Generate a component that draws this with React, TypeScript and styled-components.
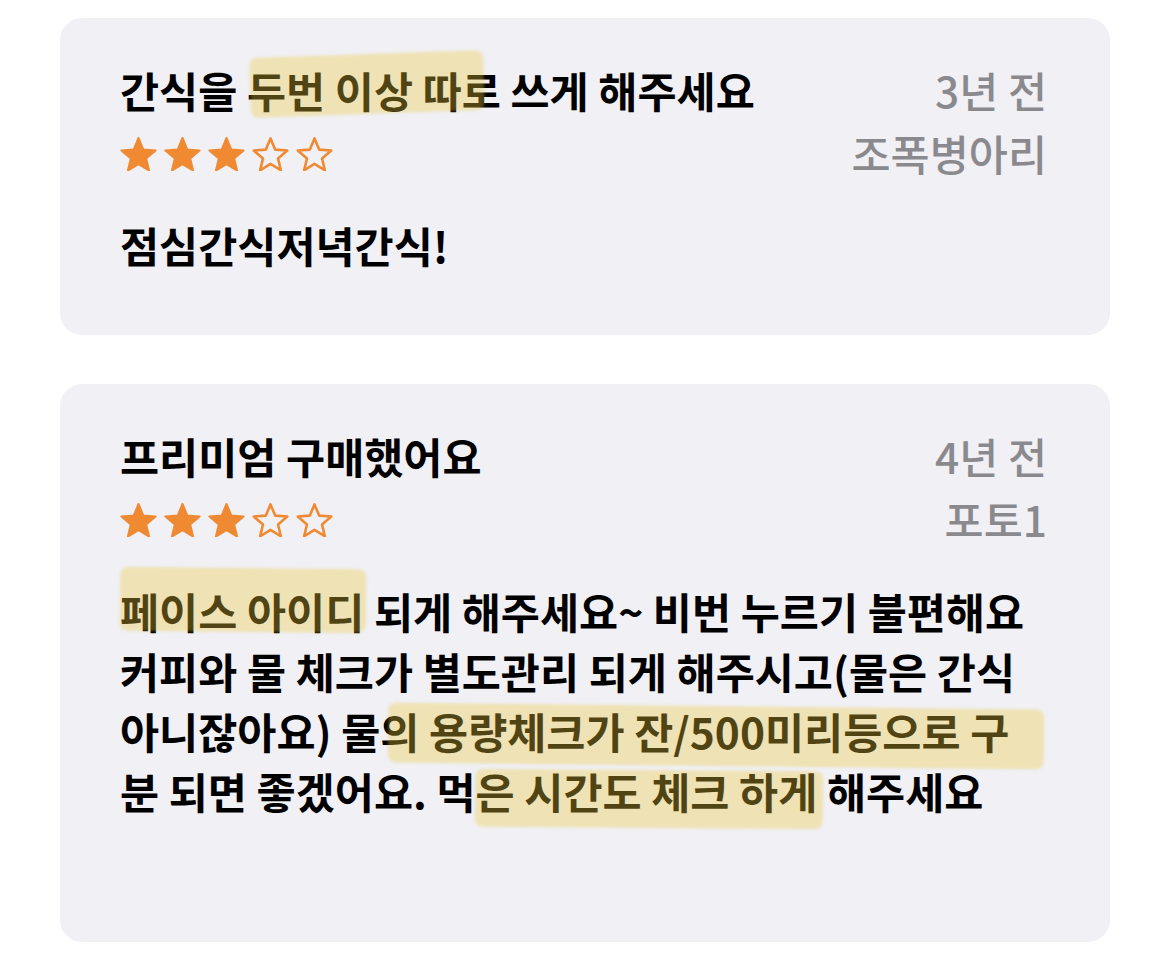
import React from "react";
import styled, { createGlobalStyle } from "styled-components";

const Global = createGlobalStyle`
  html, body { margin: 0; padding: 0; background: #ffffff; }
  body { font-family: "Noto Sans CJK KR", "Noto Sans", sans-serif; -webkit-font-smoothing: antialiased; }
`;

const Page = styled.div`
  width: 1170px;
  padding: 18px 60px 0;
  box-sizing: border-box;
  display: flex;
  flex-direction: column;
  gap: 49px;
`;

const Card = styled.section<{ $padBottom: number }>`
  position: relative;
  background: #f0f0f5;
  border-radius: 22px;
  padding: 41px 63px ${(p) => p.$padBottom}px 60px;
  overflow: hidden;
`;

const Header = styled.div`
  display: grid;
  grid-template-columns: 1fr auto;
  grid-template-rows: 62px 64px;
  align-items: center;
`;

const Title = styled.h2`
  margin: 0;
  font-size: 42.5px;
  font-weight: 700;
  letter-spacing: 0;
  color: #000;
  line-height: 62px;
  white-space: nowrap;
`;

const Meta = styled.div`
  font-size: 42.5px;
  font-weight: 500;
  color: #8a8a8e;
  line-height: 62px;
  text-align: right;
  white-space: nowrap;
`;

const Stars = styled.div`
  display: flex;
  gap: 7px;
  align-items: center;
  padding-top: 2px;
`;

const Body = styled.div`
  margin-top: 30px;
  font-size: 42.5px;
  font-weight: 600;
  color: #000;
  line-height: 60px;
`;

const Line = styled.div`
  white-space: nowrap;
`;

const Highlight = styled.div<{ $x: number; $y: number; $w: number; $h: number; $rot: number }>`
  position: absolute;
  left: ${(p) => p.$x}px;
  top: ${(p) => p.$y}px;
  width: ${(p) => p.$w}px;
  height: ${(p) => p.$h}px;
  transform: rotate(${(p) => p.$rot}deg);
  background: rgba(238, 198, 58, 0.34);
  border-radius: 8px;
  filter: blur(1.5px);
  pointer-events: none;
`;

const starPoints = (cx: number, cy: number, R: number, ratio: number) => {
  const pts: string[] = [];
  for (let k = 0; k < 10; k++) {
    const r = k % 2 === 0 ? R : R * ratio;
    const a = ((-90 + k * 36) * Math.PI) / 180;
    pts.push(`${(cx + r * Math.cos(a)).toFixed(2)},${(cy + r * Math.sin(a)).toFixed(2)}`);
  }
  return pts.join(" ");
};

const FILLED = starPoints(18.5, 19, 18, 0.45);
const EMPTY = starPoints(18.5, 19, 17.6, 0.45);

const StarIcon: React.FC<{ filled: boolean }> = ({ filled }) => (
  <svg width="37" height="34" viewBox="0 0 37 34" aria-hidden>
    {filled ? (
      <polygon points={FILLED} fill="#ef8a33" stroke="#ef8a33" strokeWidth="2" strokeLinejoin="round" />
    ) : (
      <polygon points={EMPTY} fill="none" stroke="#ef8a33" strokeWidth="2.6" strokeLinejoin="round" />
    )}
  </svg>
);

const Rating: React.FC<{ value: number }> = ({ value }) => (
  <Stars>
    {[0, 1, 2, 3, 4].map((i) => (
      <StarIcon key={i} filled={i < value} />
    ))}
  </Stars>
);

type Mark = { x: number; y: number; w: number; h: number; rot: number };

type Review = {
  title: string;
  time: string;
  author: string;
  rating: number;
  lines: string[];
  padBottom: number;
  marks: Mark[];
};

const reviews: Review[] = [
  {
    title: "간식을 두번 이상 따로 쓰게 해주세요",
    time: "3년 전",
    author: "조폭병아리",
    rating: 3,
    lines: ["점심간식저녁간식!"],
    padBottom: 60,
    marks: [{ x: 190, y: 36, w: 234, h: 60, rot: -2 }],
  },
  {
    title: "프리미엄 구매했어요",
    time: "4년 전",
    author: "포토1",
    rating: 3,
    lines: [
      "페이스 아이디 되게 해주세요~ 비번 누르기 불편해요",
      "커피와 물 체크가 별도관리 되게 해주시고(물은 간식",
      "아니잖아요) 물의 용량체크가 잔/500미리등으로 구",
      "분 되면 좋겠어요. 먹은 시간도 체크 하게 해주세요",
    ],
    padBottom: 121,
    marks: [
      { x: 60, y: 184, w: 246, h: 64, rot: 0.6 },
      { x: 328, y: 322, w: 656, h: 60, rot: 0.6 },
      { x: 415, y: 386, w: 348, h: 58, rot: 0.4 },
    ],
  },
];

export default function App() {
  return (
    <>
      <Global />
      <Page>
        {reviews.map((r, i) => (
          <Card key={i} $padBottom={r.padBottom}>
            <Header>
              <Title>{r.title}</Title>
              <Meta>{r.time}</Meta>
              <Rating value={r.rating} />
              <Meta>{r.author}</Meta>
            </Header>
            <Body>
              {r.lines.map((l, j) => (
                <Line key={j}>{l}</Line>
              ))}
            </Body>
            {r.marks.map((m, j) => (
              <Highlight key={j} $x={m.x} $y={m.y} $w={m.w} $h={m.h} $rot={m.rot} />
            ))}
          </Card>
        ))}
      </Page>
    </>
  );
}
